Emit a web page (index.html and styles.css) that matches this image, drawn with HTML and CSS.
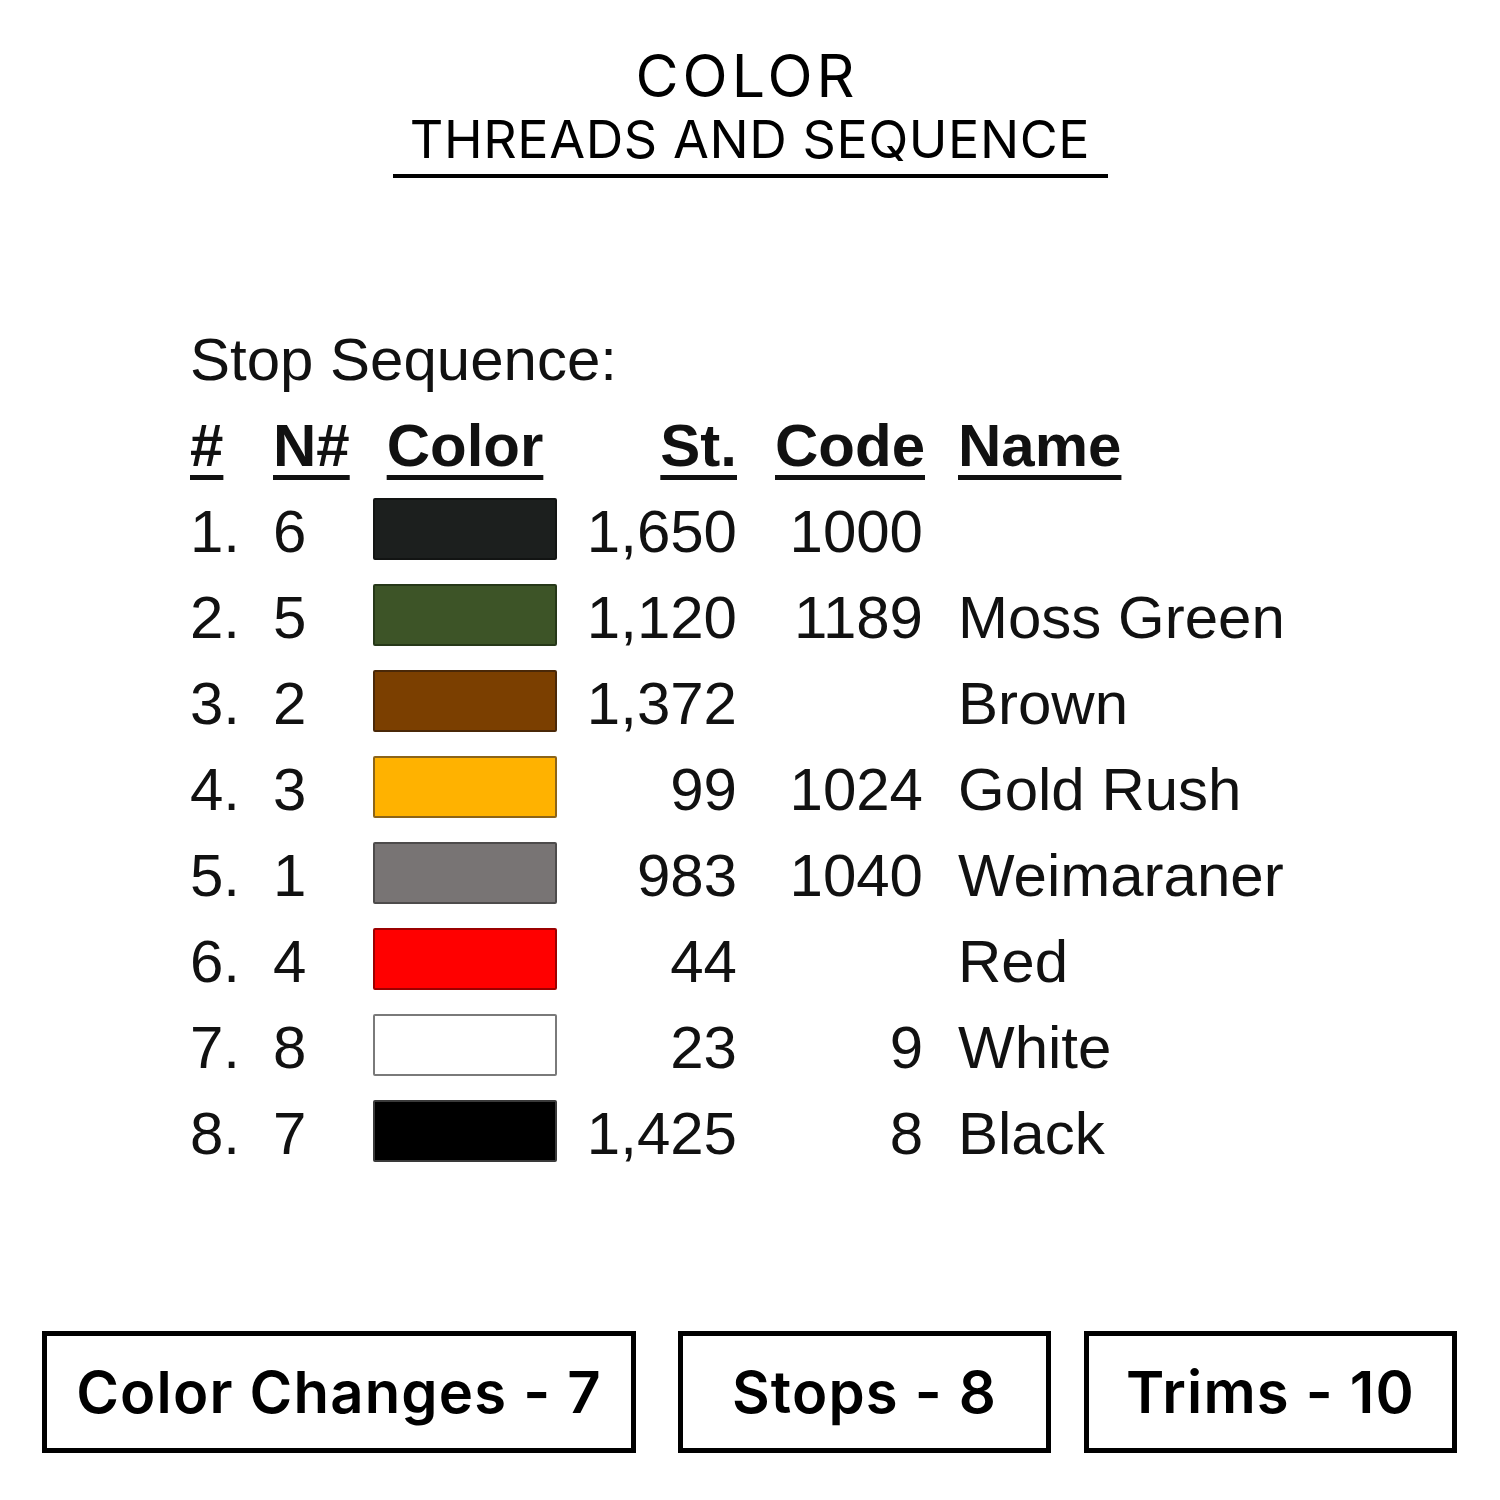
FILE: index.html
```html
<!DOCTYPE html>
<html>
<head>
<meta charset="utf-8">
<link rel="stylesheet" href="styles.css">
</head>
<body>
<header class="title">
  <div class="title-main">COLOR</div>
  <div class="title-sub">THREADS AND SEQUENCE</div>
</header>

<section class="seq">
  <div class="seq-label">Stop Sequence:</div>
  <div class="grid">
    <div class="h c-num"><span>#</span></div>
    <div class="h c-n"><span>N#</span></div>
    <div class="h c-color"><span>Color</span></div>
    <div class="h c-st"><span>St.</span></div>
    <div class="h c-code"><span>Code</span></div>
    <div class="h c-name"><span>Name</span></div>

    <div class="c-num">1.</div><div class="c-n">6</div><div class="c-sw"><div class="sw sw-1"></div></div><div class="c-st">1,650</div><div class="c-code">1000</div><div class="c-name"></div>
    <div class="c-num">2.</div><div class="c-n">5</div><div class="c-sw"><div class="sw sw-2"></div></div><div class="c-st">1,120</div><div class="c-code">1189</div><div class="c-name">Moss Green</div>
    <div class="c-num">3.</div><div class="c-n">2</div><div class="c-sw"><div class="sw sw-3"></div></div><div class="c-st">1,372</div><div class="c-code"></div><div class="c-name">Brown</div>
    <div class="c-num">4.</div><div class="c-n">3</div><div class="c-sw"><div class="sw sw-4"></div></div><div class="c-st">99</div><div class="c-code">1024</div><div class="c-name">Gold Rush</div>
    <div class="c-num">5.</div><div class="c-n">1</div><div class="c-sw"><div class="sw sw-5"></div></div><div class="c-st">983</div><div class="c-code">1040</div><div class="c-name">Weimaraner</div>
    <div class="c-num">6.</div><div class="c-n">4</div><div class="c-sw"><div class="sw sw-6"></div></div><div class="c-st">44</div><div class="c-code"></div><div class="c-name">Red</div>
    <div class="c-num">7.</div><div class="c-n">8</div><div class="c-sw"><div class="sw sw-7"></div></div><div class="c-st">23</div><div class="c-code">9</div><div class="c-name">White</div>
    <div class="c-num">8.</div><div class="c-n">7</div><div class="c-sw"><div class="sw sw-8"></div></div><div class="c-st">1,425</div><div class="c-code">8</div><div class="c-name">Black</div>
  </div>
</section>

<footer class="stats">
  <div class="stat stat-wide">Color Changes - 7</div>
  <div class="stat stat-mid">Stops - 8</div>
  <div class="stat stat-last">Trims - 10</div>
</footer>
</body>
</html>
```

FILE: styles.css
```css
html, body {
  margin: 0;
  padding: 0;
  background: #ffffff;
  color: #000000;
}
body {
  width: 1500px;
  height: 1500px;
  overflow: hidden;
}

.title {
  padding-top: 42px;
  display: flex;
  flex-direction: column;
  align-items: center;
  font-family: "Inter", "Liberation Sans", sans-serif;
  font-weight: 400;
}
.title-main {
  font-size: 59px;
  line-height: 68px;
  letter-spacing: 4px;
  margin-left: -6px;
}
.title-sub {
  width: 715px;
  text-align: center;
  font-size: 52px;
  line-height: 60px;
  letter-spacing: 0.6px;
  padding-bottom: 4px;
  border-bottom: 4px solid #000;
}

.seq {
  margin-top: 139px;
  padding-left: 190px;
  font-family: "Liberation Sans", Arial, sans-serif;
  font-size: 60px;
  line-height: 86px;
  color: #111;
}
.seq-label {
  height: 86px;
}
.grid {
  display: grid;
  grid-template-columns: 83px 100px 184px 180px 188px auto;
  grid-auto-rows: 86px;
}
.h {
  font-weight: bold;
}
.h span {
  text-decoration: underline;
  text-decoration-thickness: 5px;
  text-underline-offset: 9px;
}
.c-st, .c-code {
  text-align: right;
}
.h.c-color {
  text-align: center;
}
.c-code { padding-right: 2px; }
.h.c-code { padding-right: 0; }
.c-name {
  padding-left: 33px;
  white-space: nowrap;
}
.c-sw {
  display: flex;
  align-items: flex-start;
  padding-top: 9px;
}
.sw {
  width: 184px;
  height: 62px;
  box-sizing: border-box;
  border: 2px solid #222;
  border-radius: 2px;
}
.sw-1 { background: #1c1f1e; border-color: #121413; }
.sw-2 { background: #3d5427; border-color: #263818; }
.sw-3 { background: #7b3f00; border-color: #4a2808; }
.sw-4 { background: #ffb200; border-color: #8c6418; }
.sw-5 { background: #787474; border-color: #4d4b4b; }
.sw-6 { background: #ff0000; border-color: #9c0000; }
.sw-7 { background: #ffffff; border-color: #7a7a7a; }
.sw-8 { background: #000000; border-color: #3a3a3a; }

.stats {
  margin-top: 154px;
  display: flex;
  padding-left: 42px;
  font-family: "Inter", "Liberation Sans", sans-serif;
  font-weight: 600;
  font-size: 58px;
  letter-spacing: 1.2px;
}
.stat {
  height: 122px;
  box-sizing: border-box;
  border: 5px solid #000;
  display: flex;
  align-items: center;
  justify-content: center;
  white-space: nowrap;
}
.stat-wide { width: 594px; }
.stat-mid { width: 373px; margin-left: 42px; }
.stat-last { width: 373px; margin-left: 33px; }
```
